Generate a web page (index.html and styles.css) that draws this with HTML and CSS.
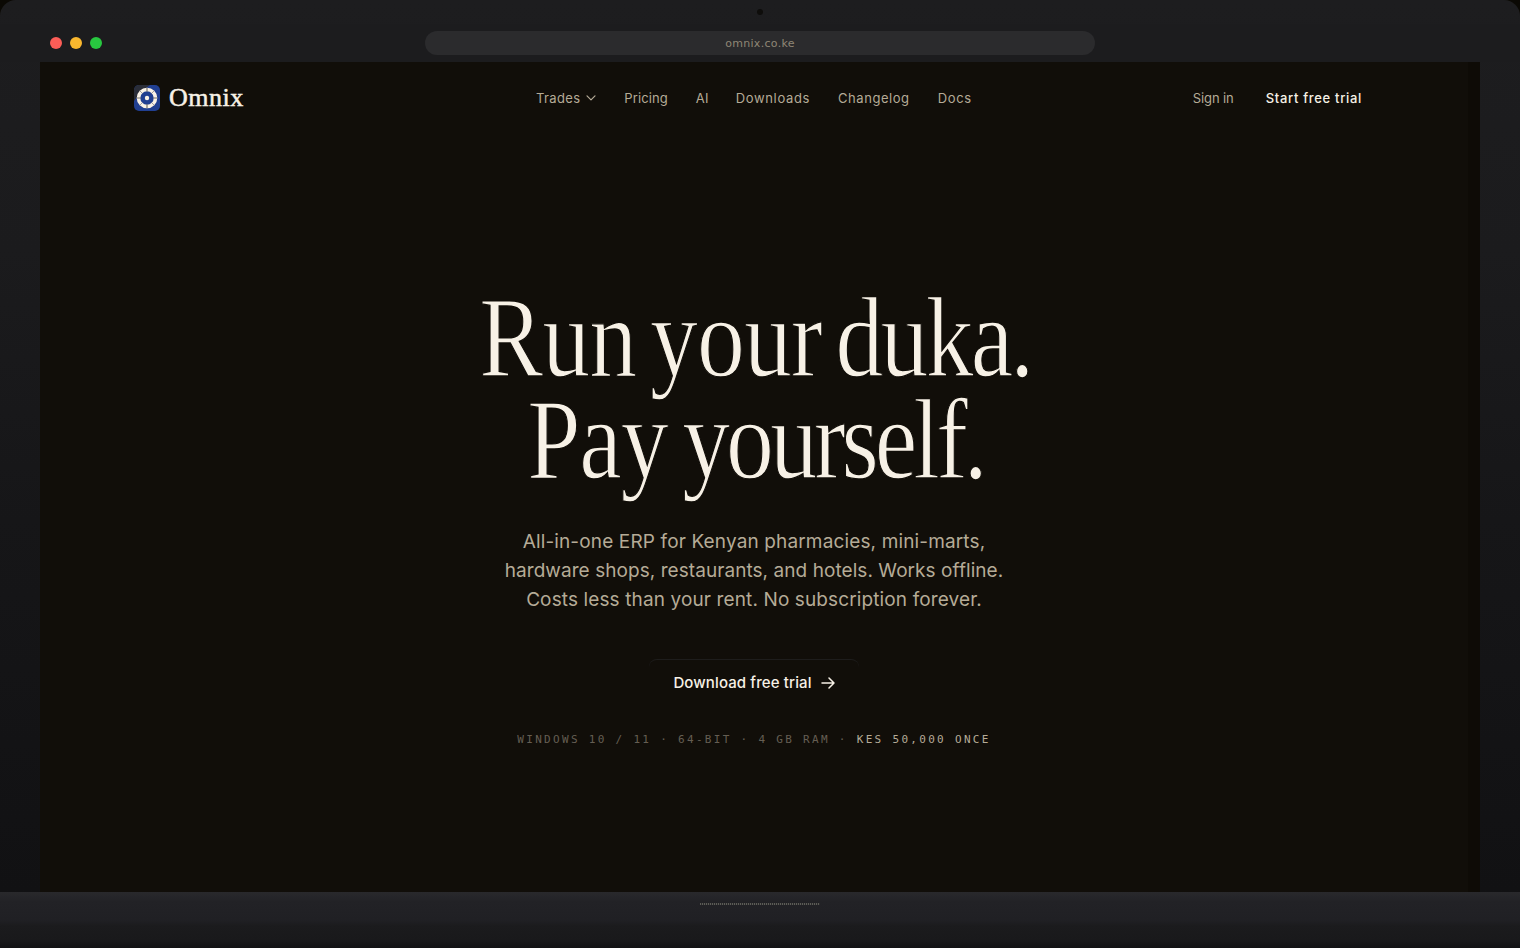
FILE: index.html
```html
<!DOCTYPE html>
<html lang="en">
<head>
    <meta charset="UTF-8">
    <meta name="viewport" content="width=device-width, initial-scale=1.0">
    <title>Omnix</title>
    <link rel="stylesheet" href="styles.css">
</head>
<body>
    <div class="laptop">
        <div class="bezel"><span class="camera"></span></div>

        <!-- Browser bar -->
        <div class="browser-bar">
            <div class="lights">
                <span class="light red"></span>
                <span class="light yellow"></span>
                <span class="light green"></span>
            </div>
            <div class="address"><span>omnix.co.ke</span></div>
        </div>

        <div class="screen">
            <div class="page">
                <header class="site-header">
                    <a class="brand">
                        <svg width="26" height="26" viewBox="0 0 26 26">
                            <rect width="26" height="26" rx="5" fill="#213f91"/>
                            <path d="M0 16V5a5 5 0 0 1 5-5h11L8 6z" fill="#2a2d38"/>
                            <circle cx="13" cy="13" r="8.5" fill="#213f91" stroke="#faf2e6" stroke-width="3.6"/>
                            <path d="M13 2.7v4M13 19.3v4M2.7 13h4M19.3 13h4" stroke="#77736c" stroke-width="1.2"/>
                            <path d="M5.8 5.8l2.6 2.6M17.6 17.6l2.6 2.6M20.2 5.8l-2.6 2.6M8.4 17.6l-2.6 2.6" stroke="#8d8a8c" stroke-width=".8"/>
                            <circle cx="13" cy="13" r="2.2" fill="#faf2e6"/>
                        </svg>
                        <span class="brand-name">Omnix</span>
                    </a>
                    <nav class="site-nav">
                        <a class="trades">Trades
                            <svg width="10" height="6" viewBox="0 0 10 6" fill="none" stroke="currentColor" stroke-width="1.2" stroke-linecap="round" stroke-linejoin="round"><path d="M1 .8l4 4 4-4"/></svg>
                        </a>
                        <a class="pricing">Pricing</a>
                        <a class="ai">AI</a>
                        <a class="downloads">Downloads</a>
                        <a class="changelog">Changelog</a>
                        <a class="docs">Docs</a>
                    </nav>
                    <div class="account">
                        <a class="sign-in">Sign in</a>
                        <a class="start">Start free trial</a>
                    </div>
                </header>

                <main class="hero">
                    <h1>
                        <span class="line line-one">Run your <span class="duka">duka.</span></span>
                        <span class="line line-two"><span class="pay">Pay</span> yourself.</span>
                    </h1>
                    <p class="lead">
                        <span class="lead-one">All-in-one ERP for Kenyan pharmacies, mini-marts,</span>
                        <span class="lead-two">hardware shops, restaurants, and hotels. Works offline.</span>
                        <span class="lead-three">Costs less than your rent. No subscription forever.</span>
                    </p>
                    <a class="download">
                        <span>Download free trial</span>
                        <svg width="14" height="12" viewBox="0 0 14 12" fill="none" stroke="currentColor" stroke-width="1.5" stroke-linecap="round" stroke-linejoin="round"><path d="M1 6h12M8 1l5 5-5 5"/></svg>
                    </a>
                    <p class="specs">WINDOWS 10 / 11 · 64-BIT · 4 GB RAM · <b>KES 50,000 ONCE</b></p>
                </main>
            </div>
            <div class="scrollbar"></div>
        </div>
        <div class="base"><span class="vent"></span></div>
    </div>
</body>
</html>
```

FILE: styles.css
```css
* {
    margin: 0;
    padding: 0;
    box-sizing: border-box;
}

body {
    background: #0b0904;
    font-family: 'Inter', sans-serif;
    overflow: hidden;
}

.laptop {
    height: 948px;
    display: flex;
    flex-direction: column;
    border-radius: 16px 16px 0 0;
    background: linear-gradient(#1d1d1f 0, #1b1b1d 250px, #161618 520px, #111113 892px);
    overflow: hidden;
}

.bezel {
    height: 24px;
    display: flex;
    align-items: center;
    justify-content: center;
}

.camera {
    width: 6px;
    height: 6px;
    border-radius: 50%;
    background: #0e0d0b;
}

.browser-bar {
    height: 38px;
    display: grid;
    grid-template-columns: 375px 670px 1fr;
    align-items: center;
    padding: 0 50px;
    background: #1c1c1e;
}

.lights {
    display: flex;
    gap: 8px;
}

.light {
    width: 12px;
    height: 12px;
    border-radius: 50%;
}

.red {
    background: #fc5d57;
}

.yellow {
    background: #f9b72e;
}

.green {
    background: #28c840;
}

.address {
    height: 24px;
    border-radius: 12px;
    background: #2b2b2d;
    color: #8f8675;
    font: 11px/25px 'DejaVu Sans', sans-serif;
    letter-spacing: .3px;
    text-align: center;
}

.screen {
    height: 830px;
    margin: 0 40px;
    display: flex;
    background: #110e09;
}

.page {
    width: 1428px;
    padding: 0 94px;
}

.scrollbar {
    width: 12px;
    background: #0e0b06;
}

.site-header {
    height: 72px;
    display: flex;
    align-items: center;
    font-size: 13px;
    color: #b5ab97;
}

.brand {
    width: 402px;
    display: flex;
    align-items: center;
    gap: 9px;
}

.brand-name {
    font: 26px/30px 'Liberation Serif', serif;
    letter-spacing: .5px;
    color: #f7f1e6;
    -webkit-text-stroke: .5px #f7f1e6;
}

.site-nav {
    display: flex;
    gap: 28px;
    letter-spacing: .2px;
}

.trades {
    display: flex;
    align-items: center;
    gap: 6px;
    letter-spacing: .35px;
}

.pricing {
    letter-spacing: .1px;
}

.ai {
    margin-right: -1px;
}

.downloads {
    letter-spacing: .65px;
}

.changelog {
    letter-spacing: .55px;
}

.docs {
    letter-spacing: .7px;
}

.account {
    margin-left: auto;
    display: flex;
    gap: 32px;
    padding-right: 12px;
}

.sign-in {
    letter-spacing: -.1px;
}

.start {
    color: #f7f1e6;
    font-weight: 500;
    letter-spacing: .68px;
}

.hero {
    display: flex;
    flex-direction: column;
    align-items: center;
    padding-top: 153px;
}

h1 {
    height: 204px;
    display: flex;
    flex-direction: column;
    align-items: center;
    font: 400 114px/102px 'Liberation Serif', serif;
    color: #f7f1e6;
    white-space: nowrap;
    /* thins the letter stems */
    -webkit-text-stroke: 1.3px #110e09;
}

.line {
    transform: scaleX(.84);
    padding-left: 3px;
}

.line-one {
    letter-spacing: -1.1px;
    word-spacing: -11px;
}

.duka {
    letter-spacing: -3.4px;
}

.line-two {
    letter-spacing: -4.8px;
    word-spacing: -6px;
}

.pay {
    letter-spacing: -1.4px;
}

.lead {
    margin-top: 36px;
    display: flex;
    flex-direction: column;
    align-items: center;
    font-size: 19px;
    line-height: 29px;
    color: #b5ab97;
    white-space: nowrap;
}

.lead-one {
    letter-spacing: .14px;
}

.lead-two {
    letter-spacing: .06px;
}

.lead-three {
    letter-spacing: .12px;
}

.download {
    margin-top: 45px;
    width: 210px;
    height: 48px;
    display: flex;
    align-items: center;
    justify-content: center;
    gap: 9px;
    padding-bottom: 2px;
    border-top: 1px solid #1e1d1c;
    border-radius: 8px;
    font-size: 15px;
    font-weight: 500;
    letter-spacing: .12px;
    color: #f7f1e6;
}

.specs {
    margin-top: 25px;
    font: 11px/16px 'DejaVu Sans Mono', monospace;
    letter-spacing: 2.31px;
    color: #655e53;
    white-space: pre;
}

.specs b {
    font-weight: 400;
    color: #b5ab97;
}

.base {
    height: 56px;
    display: flex;
    justify-content: center;
    padding-top: 11px;
    background: linear-gradient(#29292c 0, #222226 10px, #202024 28px, #1b1b1d 34px, #19191b 48px, #121214 56px);
}

.vent {
    width: 120px;
    height: 2px;
    background: repeating-linear-gradient(90deg, #5b5b56 0 1px, #2b2b2c 1px 2px);
}
```
